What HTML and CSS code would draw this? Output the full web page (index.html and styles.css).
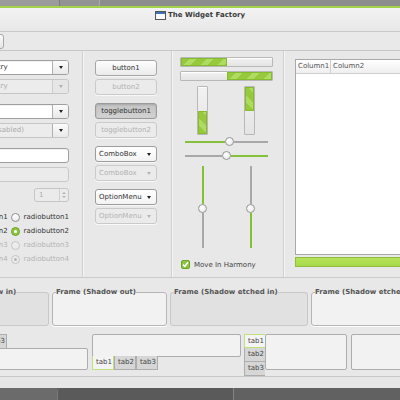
FILE: index.html
```html
<!DOCTYPE html>
<html>
<head>
<meta charset="utf-8">
<title>The Widget Factory</title>
<link rel="stylesheet" href="styles.css">
</head>
<body>
<div class="desk-top"><div class="dt-a"></div><div class="dt-b"></div><div class="dt-c"></div></div>
<div class="accent"></div>
<div class="titlebar">
  <svg class="app-icon" width="11" height="9" viewBox="0 0 11 9"><rect x="0.5" y="0.5" width="10" height="8" fill="#fafafa" stroke="#555"/><rect x="1" y="1" width="9" height="2" fill="#3f73b8"/></svg>
  <span class="title">The Widget Factory</span>
</div>
<div class="toolbar"><div class="tool-btn"></div></div>
<div class="main">
  <div class="col col1">
    <div class="group">
      <div class="combo"><span class="combo-entry">Combo Entry</span><span class="combo-btn"><i class="arrow"></i></span></div>
      <div class="combo is-disabled"><span class="combo-entry">Combo Entry</span><span class="combo-btn"><i class="arrow"></i></span></div>
    </div>
    <div class="group">
      <div class="combo"><span class="combo-entry"></span><span class="combo-btn"><i class="arrow"></i></span></div>
      <div class="combo is-disabled half"><span class="combo-entry">Combo (disabled)</span><span class="combo-btn"><i class="arrow"></i></span></div>
    </div>
    <div class="group">
      <div class="entry"></div>
      <div class="entry is-disabled"></div>
    </div>
    <div class="spin"><span class="spin-text">1</span><span class="spin-btns"><i class="arrow-up"></i><i class="arrow small"></i></span></div>
    <div class="radios">
      <div class="opt-row"><span class="cbox"></span><span class="chk-label">checkbutton1</span><span class="radio"></span><span class="opt-label">radiobutton1</span></div>
      <div class="opt-row"><span class="cbox on"></span><span class="chk-label">checkbutton2</span><span class="radio on"></span><span class="opt-label">radiobutton2</span></div>
      <div class="opt-row dim"><span class="cbox"></span><span class="chk-label">checkbutton3</span><span class="radio"></span><span class="opt-label">radiobutton3</span></div>
      <div class="opt-row dim"><span class="cbox"></span><span class="chk-label">checkbutton4</span><span class="radio dot"></span><span class="opt-label">radiobutton4</span></div>
    </div>
  </div>

  <div class="col col2">
    <div class="group">
      <div class="btn">button1</div>
      <div class="btn is-disabled">button2</div>
    </div>
    <div class="group">
      <div class="btn is-pressed">togglebutton1</div>
      <div class="btn is-disabled">togglebutton2</div>
    </div>
    <div class="group">
      <div class="btn menu"><span>ComboBox</span><i class="arrow"></i></div>
      <div class="btn menu is-disabled"><span>ComboBox</span><i class="arrow"></i></div>
    </div>
    <div class="group">
      <div class="btn menu"><span>OptionMenu</span><i class="arrow"></i></div>
      <div class="btn menu is-disabled"><span>OptionMenu</span><i class="arrow"></i></div>
    </div>
  </div>

  <div class="col col3">
    <div class="hprog"><div class="hfill" style="width:50%"></div></div>
    <div class="hprog end"><div class="hfill" style="width:50%"></div></div>
    <div class="vprogs">
      <div class="vprog end"><div class="vfill" style="height:50%"></div></div>
      <div class="vprog"><div class="vfill" style="height:50%"></div></div>
    </div>
    <div class="hscale first"><div class="sc-green" style="width:40px"></div><div class="knob"></div><div class="sc-gray"></div></div>
    <div class="hscale second"><div class="sc-gray" style="width:37px;flex:none"></div><div class="knob"></div><div class="sc-green"></div></div>
    <div class="vscales">
      <div class="vscale"><div class="sc-green" style="height:38px"></div><div class="knob"></div><div class="sc-gray"></div></div>
      <div class="vscale"><div class="sc-gray" style="height:38px;flex:none"></div><div class="knob"></div><div class="sc-green"></div></div>
    </div>
    <div class="check-row">
      <span class="checkbox"><svg width="9" height="9" viewBox="0 0 9 9"><path d="M2 4.6 L3.8 6.4 L7 2.2" fill="none" stroke="#fff" stroke-width="1.5"/></svg></span>
      <span>Move In Harmony</span>
    </div>
  </div>

  <div class="col col4">
    <div class="tree">
      <div class="tree-head"><span class="th th1">Column1</span><span class="th">Column2</span></div>
    </div>
    <div class="full-bar"></div>
  </div>
</div>

<div class="frames">
  <fieldset class="frame sunken w111"><legend>Frame (Shadow in)</legend><div class="frame-body"></div></fieldset>
  <fieldset class="frame raised w115"><legend>Frame (Shadow out)</legend><div class="frame-body"></div></fieldset>
  <fieldset class="frame sunken w138"><legend>Frame (Shadow etched in)</legend><div class="frame-body"></div></fieldset>
  <fieldset class="frame raised w140"><legend>Frame (Shadow etched out)</legend><div class="frame-body"></div></fieldset>
</div>

<div class="notebooks">
  <div class="nb nb1">
    <div class="nb-tabs"><span class="tab active">tab1</span><span class="tab">tab2</span><span class="tab">tab3</span></div>
    <div class="nb-page"></div>
  </div>
  <div class="nb nb2">
    <div class="nb-page"></div>
    <div class="nb-tabs"><span class="tab active">tab1</span><span class="tab">tab2</span><span class="tab">tab3</span></div>
  </div>
  <div class="nb nb3">
    <div class="nb-tabs"><span class="tab active">tab1</span><span class="tab">tab2</span><span class="tab">tab3</span></div>
    <div class="nb-page"></div>
  </div>
  <div class="nb nb4">
    <div class="nb-page"></div>
  </div>
</div>
<div class="statusbar"></div>
<div class="desk-bottom"><div class="db-a"></div><div class="db-b"></div><div class="db-c"></div></div>
</body>
</html>
```

FILE: styles.css
```css
* { box-sizing: border-box; }
html, body { margin: 0; padding: 0; }
body {
  width: 400px;
  height: 400px;
  overflow: hidden;
  background: #e8e8e8;
  font-family: "DejaVu Sans", "Liberation Sans", sans-serif;
  font-size: 7px;
  color: #3a3a3a;
}

/* desktop / window chrome */
.desk-top { height: 6px; display: flex; }
.dt-a { width: 60px; background: #9b9b9b; border-right: 1px solid #7b7b7b; }
.dt-b { width: 40px; background: #939393; border-right: 1px solid #a8a8a8; }
.dt-c { flex: 1; background: #8c8c8c; }
.accent { height: 2px; background: #a5d24a; }
.titlebar {
  height: 24px;
  display: flex;
  justify-content: center;
  align-items: flex-start;
  gap: 2px;
  padding-top: 3px;
  background: linear-gradient(#f3f3f3, #e7e7e7);
  border-bottom: 1px solid #c9c9c9;
}
.title { font-weight: bold; line-height: 9px; color: #3a3a3a; }
.toolbar {
  height: 19px;
  padding-top: 2px;
  background: #e9e9e9;
  border-bottom: 1px solid #c6c6c6;
}
.tool-btn {
  width: 24px;
  height: 15px;
  margin-left: -20px;
  border: 1px solid #a8a8a8;
  border-radius: 3px;
  background: linear-gradient(#fafafa, #e6e6e6);
}

/* main area */
.main {
  display: flex;
  height: 227px;
  border-bottom: 1px solid #cbcbcb;
}
.col { display: flex; flex-direction: column; }
.col + .col { border-left: 1px solid #d0d0d0; box-shadow: inset 1px 0 #f5f5f5; }
.col1 { width: 82px; align-items: flex-end; padding: 9px 13px 0 0; }
.col2 { width: 89px; padding: 9px 0 0 12px; }
.col3 { width: 112px; padding: 6px 0 0 8px; }
.col4 { flex: 1; padding: 8px 0 0 11px; overflow: hidden; }

.group { display: flex; flex-direction: column; gap: 4px; align-items: flex-end; }
.col1 .group + .group { margin-top: 10px; }
.col2 .group { gap: 3px; align-items: flex-start; }
.col2 .group + .group { margin-top: 8px; }

/* triangles */
.arrow {
  display: inline-block;
  width: 0; height: 0;
  border-left: 2.5px solid transparent;
  border-right: 2.5px solid transparent;
  border-top: 3px solid #222;
}
.arrow-up {
  display: inline-block;
  width: 0; height: 0;
  border-left: 2px solid transparent;
  border-right: 2px solid transparent;
  border-bottom: 2.5px solid #b4b4b4;
}
.arrow.small { border-left-width: 2px; border-right-width: 2px; border-top: 2.5px solid #b4b4b4; }

/* combo entries */
.combo {
  display: flex;
  width: 111px;
  height: 15px;
  border: 1px solid #9f9f9f;
  border-radius: 3px;
  background: #fff;
  box-shadow: inset 0 1px 1px rgba(0,0,0,0.06);
  overflow: hidden;
}
.combo-entry { flex: 1; padding-left: 3px; line-height: 13px; color: #333; white-space: nowrap; }
.combo-btn {
  width: 16px;
  display: flex;
  align-items: center;
  justify-content: center;
  border-left: 1px solid #b0b0b0;
  background: linear-gradient(#fbfbfb, #e9e9e9);
}
.combo.is-disabled { border-color: #c6c6c6; background: #ececec; box-shadow: none; }
.combo.is-disabled .combo-entry { color: #aaa; }
.combo.is-disabled .combo-btn { background: #e6e6e6; border-left-color: #cdcdcd; }
.combo.is-disabled .arrow { border-top-color: #b0b0b0; }
.combo.half .arrow { border-top-color: #222; }
.combo.half .combo-btn { background: linear-gradient(#fbfbfb, #e9e9e9); border-left-color: #b0b0b0; }

.entry {
  width: 111px;
  height: 15px;
  border: 1px solid #9f9f9f;
  border-radius: 3px;
  background: #fff;
  box-shadow: inset 0 1px 1px rgba(0,0,0,0.06);
}
.entry.is-disabled { border-color: #c9c9c9; background: #ebebeb; box-shadow: none; }

.spin {
  display: flex;
  width: 35px;
  height: 14px;
  margin-top: 6px;
  border: 1px solid #c6c6c6;
  border-radius: 3px;
  background: #ebebeb;
}
.spin-text { flex: 1; padding-left: 4px; line-height: 12px; color: #aaa; }
.spin-btns {
  width: 9px;
  display: flex;
  flex-direction: column;
  align-items: center;
  justify-content: center;
  gap: 2px;
  border-left: 1px solid #d0d0d0;
}

.radios { margin-top: 8px; display: flex; flex-direction: column; align-items: flex-end; }
.opt-row { display: flex; align-items: center; height: 14px; white-space: nowrap; color: #333; }
.cbox {
  width: 9px; height: 9px;
  margin-right: 3px;
  border: 1px solid #9a9a9a;
  border-radius: 2px;
  background: #fff;
}
.cbox.on { background: #8cc63f; border-color: #6fa22c; }
.chk-label { margin-right: 3px; }
.radio {
  width: 9px; height: 9px;
  margin-right: 4px;
  border: 1px solid #8f8f8f;
  border-radius: 50%;
  background: linear-gradient(#ffffff, #ececec);
  display: flex; align-items: center; justify-content: center;
}
.radio.on { background: #8cc63f; border-color: #6ea32a; }
.radio.on::after { content: ""; width: 3px; height: 3px; border-radius: 50%; background: #fff; }
.radio.dot::after { content: ""; width: 3px; height: 3px; border-radius: 50%; background: #b5b5b5; }
.opt-row.dim { color: #b3b3b3; }
.opt-row.dim .radio { border-color: #c4c4c4; background: #ececec; }
.opt-row.dim .cbox { border-color: #c4c4c4; background: #ececec; }

/* buttons */
.btn {
  width: 62px;
  height: 16px;
  border: 1px solid #a6a6a6;
  border-radius: 3px;
  background: linear-gradient(#fdfdfd, #ebebeb);
  text-align: center;
  line-height: 14px;
  color: #333;
  box-shadow: 0 1px 0 rgba(255,255,255,0.7);
}
.btn.is-disabled { border-color: #cacaca; background: #ebebeb; color: #b2b2b2; }
.btn.is-pressed {
  border-color: #9a9a9a;
  background: linear-gradient(#c4c4c4, #d2d2d2);
  box-shadow: inset 0 1px 2px rgba(0,0,0,0.15);
}
.btn.menu {
  display: flex;
  align-items: center;
  justify-content: space-between;
  padding: 0 5px 0 3px;
  background: linear-gradient(#ffffff, #f3f3f3);
  border-color: #9c9c9c;
}
.btn.menu.is-disabled { background: #ebebeb; border-color: #cacaca; }
.btn.menu.is-disabled .arrow { border-top-color: #b5b5b5; }

/* progress bars */
.hprog, .vprog {
  display: flex;
  border: 1px solid #b8b8b8;
  border-radius: 1px;
  background: linear-gradient(#f2f2f2, #e4e4e4);
  box-shadow: inset 0 1px #fff;
}
.hprog { width: 93px; height: 10px; }
.hprog + .hprog { margin-top: 4px; }
.hprog.end { justify-content: flex-end; }
.hfill, .vfill {
  background: repeating-linear-gradient(135deg, #96c93b 0 7px, #b0db62 7px 12px);
  box-shadow: inset 0 0 0 1px #86bb2f;
}
.vprogs { display: flex; gap: 36px; padding-left: 17px; margin-top: 5px; }
.vprog { flex-direction: column; width: 11px; height: 49px; }
.vprog.end { justify-content: flex-end; }
.vfill { background: repeating-linear-gradient(45deg, #96c93b 0 7px, #b0db62 7px 12px); }

/* scales */
.hscale { display: flex; align-items: center; width: 83px; height: 9px; margin-left: 5px; }
.hscale.first { margin-top: 2px; }
.hscale.second { margin-top: 5px; }
.hscale .sc-green, .hscale .sc-gray { height: 2px; }
.sc-green { background: #84c03a; flex: 1; }
.sc-gray { background: #a8a8a8; flex: 1; }
.hscale .sc-green[style] { flex: none; }
.knob {
  width: 9px; height: 9px;
  flex: none;
  border: 1px solid #979797;
  border-radius: 50%;
  background: radial-gradient(circle at 40% 35%, #ffffff, #e4e4e4);
}
.vscales { display: flex; gap: 39px; padding-left: 18px; margin-top: 6px; }
.vscale { display: flex; flex-direction: column; align-items: center; width: 9px; height: 82px; }
.vscale .sc-green, .vscale .sc-gray { width: 2px; }
.vscale .sc-green[style] { flex: none; }
.check-row { display: flex; align-items: center; gap: 4px; margin: 12px 0 0 1px; color: #444; }
.checkbox {
  width: 9px; height: 9px;
  display: flex;
  border: 1px solid #6fa22c;
  border-radius: 2px;
  background: #8cc63f;
}
.checkbox svg { margin: -1px; }

/* tree view */
.tree {
  width: 150px;
  height: 196px;
  border: 1px solid #a9a9a9;
  background: #fff;
}
.tree-head {
  display: flex;
  height: 14px;
  border-bottom: 1px solid #cfcfcf;
  background: linear-gradient(#ffffff, #efefef);
  color: #555;
  line-height: 13px;
}
.th { padding-left: 2px; }
.th1 { width: 35px; border-right: 1px solid #cfcfcf; }
.full-bar {
  width: 150px;
  height: 10px;
  margin-top: 2px;
  border: 1px solid #8fbd3e;
  background: linear-gradient(#b7e25a, #a8d94a);
}

/* frames */
.frames { display: flex; gap: 3px; margin-left: -62px; padding-top: 10px; }
.frame {
  margin: 0;
  padding: 0;
  flex: none;
  border-radius: 3px;
}
.frame legend {
  padding: 0;
  margin-left: 3px;
  font-weight: bold;
  color: #555;
  line-height: 8px;
}
.frame-body { height: 29px; }
.frame.sunken { border: 1px solid #c8c8c8; background: #e1e1e1; }
.frame.raised { border: 1px solid #b5b5b5; background: #f2f2f2; box-shadow: 0 1px 0 #fff; }
.w111 { width: 111px; }
.w115 { width: 115px; }
.w138 { width: 138px; }
.w140 { width: 140px; }

/* notebooks */
.notebooks {
  display: flex;
  align-items: flex-start;
  height: 43px;
  margin-top: 8px;
  margin-left: -59px;
  border-bottom: 1px solid #c8c8c8;
}
.nb { display: flex; flex: none; }
.nb-page { border: 1px solid #adadad; border-radius: 2px; background: #f2f2f2; }
.nb-tabs { display: flex; flex: none; }
.tab {
  width: 22px;
  height: 14px;
  padding-left: 3px;
  line-height: 12px;
  border: 1px solid #adadad;
  background: #d6d6d6;
  color: #444;
}
.tab.active { background: #f4f4f4; border-color: #bfe07d; }

.nb1 { width: 147px; flex-direction: column; }
.nb1 .tab { height: 14px; border-bottom: none; }
.nb1 .nb-page { height: 22px; }

.nb2 { width: 149px; margin-left: 4px; flex-direction: column; }
.nb2 .nb-page { height: 23px; }
.nb2 .nb-tabs { margin-top: -1px; }
.nb2 .tab { height: 14px; border-top: none; }
.nb2 .tab.active { border-top: none; }

.nb3 { width: 103px; margin-left: 3px; }
.nb3 .nb-tabs { flex-direction: column; }
.nb3 .tab { width: 21px; border-right: none; }
.nb3 .tab + .tab { border-top: none; }
.nb3 .nb-page { flex: 1; height: 36px; }

.nb4 { width: 100px; margin-left: 4px; }
.nb4 .nb-page { flex: 1; height: 36px; }

.statusbar { height: 11px; background: #e6e6e6; }
.desk-bottom { height: 12px; display: flex; background: #5d5d5d; }
.db-a { width: 57px; background: #6b6b6b; }
.db-b { width: 176px; background: #5a5a5a; border-top-left-radius: 4px; border-left: 1px solid #7a7a7a; }
.db-c { flex: 1; background: #616161; border-left: 1px solid #858585; }
```
